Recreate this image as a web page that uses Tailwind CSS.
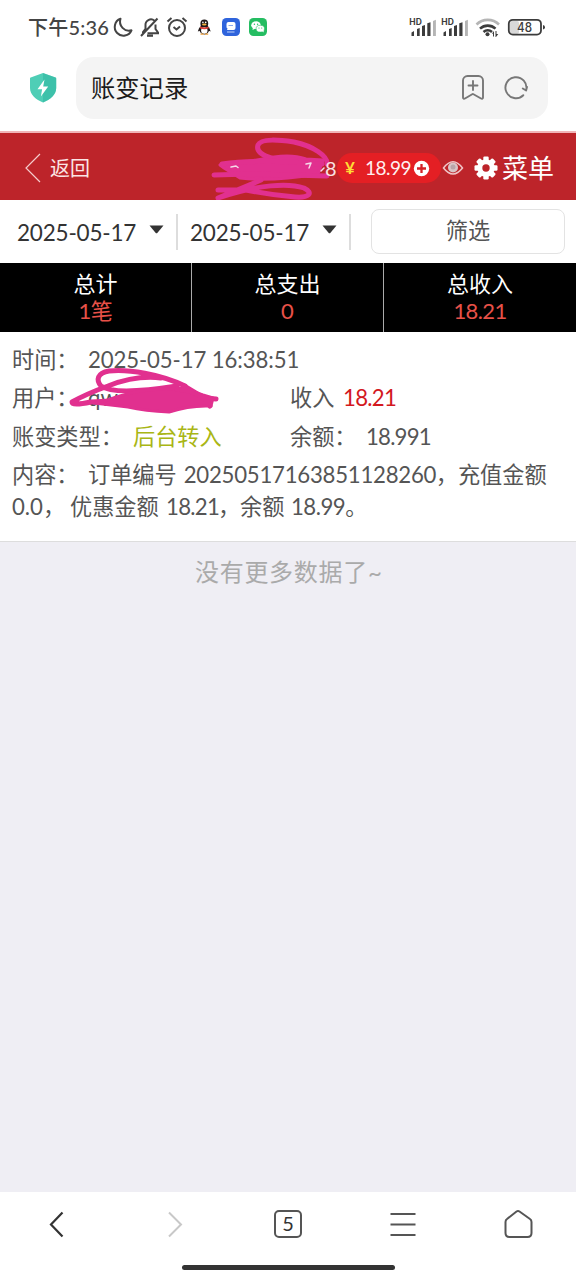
<!DOCTYPE html>
<html lang="zh-CN">
<head>
<meta charset="utf-8">
<title>账变记录</title>
<script src="https://cdn.jsdelivr.net/npm/@tailwindcss/browser@4"></script>
</head>
<body class="w-[576px] h-[1280px] overflow-hidden bg-white font-['Lato','Noto_Sans_CJK_SC',sans-serif] text-[22.200px] text-[#555] flex flex-col whitespace-nowrap">
<!-- status bar -->
<header class="h-[57px] shrink-0 flex items-start pt-[12px] pl-[28px] text-[#444]">
  <div class="h-[30px] w-[82px] flex items-center text-[20px] font-medium tracking-[0.200px]">下午5:36</div>
  <svg class="w-[166px] h-[30px]" viewBox="110 12 166 30" fill="none" stroke="#444" stroke-width="2">
    <path d="M120.500 18.800A8.700 8.700 0 1 0 131.500 30.300A9 9 0 0 1 120.500 18.800z" stroke-linejoin="round"/>
    <path d="M143 33V32l2.500-3v-3.500a5.500 5.500 0 0 1 9-4.800M155.500 24.500v4.500l2.500 3.500v.8h-10.500M141 36L157.500 18.500" />
    <path d="M147 35.600h6" stroke-width="2.400"/>
    <circle cx="177" cy="28" r="8"/><path d="M167.500 21.500l4-3.500M186.500 21.500l-4-3.500M173.500 27l3 2.500 3.500-3"/>
    <g stroke="none">
      <ellipse cx="204.300" cy="29.500" rx="4.800" ry="5" fill="#211919"/><ellipse cx="204.300" cy="23.800" rx="3.900" ry="4.200" fill="#211919"/>
      <path d="M199.500 27l-1.700 4.500 2.700-1zM209 27l1.700 4.500-2.700-1z" fill="#211919"/>
      <ellipse cx="204.300" cy="30.500" rx="3.200" ry="3.300" fill="#fff"/>
      <path d="M200 26.500q4.500 2 8.600 0v1.800q-4 2-8.600 0z" fill="#e53c35"/>
      <ellipse cx="204.300" cy="24.500" rx="2.300" ry="1" fill="#f3b13e"/><circle cx="202.900" cy="22.400" r=".8" fill="#fff"/><circle cx="205.700" cy="22.400" r=".8" fill="#fff"/>
      <path d="M200.500 33.500h3.200v1.200h-3.200zM205 33.500h3.200v1.200H205z" fill="#eea03a"/>
      <rect x="222" y="18" width="18" height="18" rx="4.500" fill="#2f64dc"/>
      <path d="M228.500 22h5a2 2 0 0 1 2 2v4a2 2 0 0 1-2 2h-6.500l.5-1.500-1-1V24a2 2 0 0 1 2-2z" fill="#fff"/>
      <path d="M228.500 25.500h4.500" stroke="#6c93ea" stroke-width=".8"/><path d="M227 32h7.500" stroke="#a9c2f5" stroke-width="1.200"/>
      <rect x="249" y="18" width="18" height="18" rx="4.500" fill="#25bd62"/>
      <ellipse cx="256" cy="25.200" rx="4.800" ry="3.900" fill="#fff"/><path d="M253 27l-.5 3 3-1.500z" fill="#fff"/>
      <ellipse cx="260.300" cy="28.700" rx="4.200" ry="3.400" fill="#fff" stroke="#25bd62" stroke-width=".6"/><path d="M262 31l1.700 1.500-.2-2.500z" fill="#fff"/>
      <g fill="#25bd62"><circle cx="254.400" cy="24.300" r=".7"/><circle cx="257.600" cy="24.300" r=".7"/><circle cx="259" cy="28" r=".6"/><circle cx="261.700" cy="28" r=".6"/></g>
    </g>
  </svg>
  <svg class="ml-[124px] w-[150px] h-[30px]" viewBox="400 12 150 30" fill="#3c3c3c">
    <g id="sig"><text x="409.300" y="25" font-family="Inter" font-size="8.500" font-weight="700" textLength="12.500" lengthAdjust="spacingAndGlyphs">HD</text>
    <path d="M411.500 32.500l2.500-1.500v5h-2.500zM417 29l2.700-1v8H417zM422 26l3-1v11h-3zM427.300 23.200l3.200-1V36h-3.200z"/><path d="M433 21l2.900-1.200V36H433z" fill="#b5b5b5"/></g>
    <use href="#sig" x="32"/>
    <g fill="none" stroke-width="2.600"><path d="M476.500 24.500a16 16 0 0 1 22.500 0" stroke="#b5b5b5"/><path d="M480 28.600a11.500 11.500 0 0 1 15.500 0M483.500 32a6.500 6.500 0 0 1 8.500 0" stroke="#3c3c3c"/></g>
    <circle cx="487.500" cy="34.200" r="2"/><path d="M492 33.500l2-2.500v5.500h-1v-2.800zM495.500 31h1v3h1.800l-2.300 3h-.5z"/>
    <rect x="510" y="21" width="9" height="13" rx="2" fill="#d9d9d9"/>
    <rect x="508.800" y="19.800" width="32.200" height="14.800" rx="4" fill="none" stroke="#3c3c3c" stroke-width="1.800"/><path d="M543 25q2 .3 2 2.300t-2 2.300z"/>
    <text x="517" y="31.800" font-family="Inter" font-size="12.500" font-weight="500" textLength="15" lengthAdjust="spacingAndGlyphs">48</text>
  </svg>
</header>
<!-- address bar -->
<div class="h-[74px] shrink-0 flex items-start">
  <svg class="ml-[29px] mt-[15px] w-[28px] h-[31px]" viewBox="29 72 28 31"><path d="M43 73l12.500 4.500a1 1 0 0 1 .7 1V88c0 7-6 11.500-13.200 14.500C36 99.500 30 95 30 88v-9.500a1 1 0 0 1 .7-1z" fill="#4fceb6"/><path d="M43 73l12.500 4.500a1 1 0 0 1 .7 1V88c0 7-6 11.500-13.200 14.500z" fill="#2fb7a0" opacity=".55"/><path d="M44.500 79.500L37.500 89.200h4.600l-1.200 7.300 7.300-10h-5z" fill="#fff"/></svg>
  <div class="ml-[19px] w-[472px] h-[62px] rounded-[18px] bg-[#f4f4f4] flex items-center pl-[15px]">
    <span class="w-[364px] text-[24.300px] text-[#1c1c1c]">账变记录</span>
    <svg class="w-[80px] h-[34px]" viewBox="455 71 80 34" fill="none" stroke="#777" stroke-width="1.900" stroke-linejoin="round" stroke-linecap="round"><path d="M467.500 76h11a4.500 4.500 0 0 1 4.500 4.500v17c0 1.200-1 1.500-2 1l-7.500-4.300c-.5-.3-.8-.3-1.300 0L465 98.500c-1 .5-2 .2-2-1v-17a4.500 4.500 0 0 1 4.500-4.500z"/><path d="M473 81v9M468.500 85.500h9"/><path d="M523.300 95.200A10.500 10.500 0 1 1 526.200 90M522.800 88.500l3.300 2 .9-3.500"/></svg>
  </div>
</div>
<!-- site navigation -->
<nav class="relative h-[69px] shrink-0 border-t-2 border-[#f1b5b8] bg-[#bd242a] flex items-center text-white pl-[24px] pt-[3px]">
  <svg class="w-[17px] h-[30px]" viewBox="24 153 17 30" fill="none" stroke="#f5cccc" stroke-width="1.200"><path d="M40 154L26 168l14 14"/></svg>
  <span class="ml-[9px] w-[275px] text-[20px] text-[#fbe5e5]">返回</span>
  <span class="w-[12px] text-[20px] text-[#fae3e3] relative z-10">8</span>
  <div class="h-[30px] w-[104px] rounded-full bg-[#e41f24] flex items-center pl-[8px]">
    <span class="w-[20px] text-[17px] font-bold text-[#ffdc35]">¥</span>
    <span class="w-[48px] text-[19px] text-[#fff0f0] tracking-[-0.500px]">18.99</span>
    <svg class="w-[17px] h-[17px]" viewBox="0 0 17 17"><circle cx="8.500" cy="8.500" r="7.700" fill="#fff"/><path d="M8.500 4v9M4 8.500h9" stroke="#d52127" stroke-width="2.300"/></svg>
  </div>
  <svg class="ml-[1px] w-[22px] h-[18px]" viewBox="0 0 22 18"><path d="M1.500 9Q11-3.500 20.500 9 11 21 1.500 9z" fill="none" stroke="#f0c5c7" stroke-width="1.500"/><circle cx="11" cy="8.500" r="5" fill="#d9c5c7"/><circle cx="11" cy="8" r="2.500" fill="#b9a5a9"/></svg>
  <svg class="ml-[10px] w-[24px] h-[24px]" viewBox="-12 -12 24 24"><g fill="#fff"><g id="t"><rect x="-2.700" y="-11.500" width="5.400" height="23" rx="1.200"/><rect x="-11.500" y="-2.700" width="23" height="5.400" rx="1.200"/></g><use href="#t" transform="rotate(45)"/><circle r="8.700"/></g><circle r="3.700" fill="#bd242a"/></svg>
  <span class="ml-[4px] text-[26px]">菜单</span>
  <svg class="absolute left-[205px] top-0 w-[130px] h-[67px]" viewBox="205 133 130 67" fill="none" stroke="#e1308f" stroke-width="5" stroke-linecap="round" stroke-linejoin="round">
    <path d="M274 159C261 155 256 151 258 145C261 138 280 140 294 142C313 146 328 156 327 164"/>
    <path d="M220 165Q230 162 245 162L274 157Q292 154 306 159L323 160 318 174Q270 182 240 178L224 168z" fill="#e1308f" stroke-width="3"/>
    <path d="M222 164Q250 160 290 162L322 164M214 175L250 174 327 176M218 190L246 190Q270 195 295 197C309 198 314 193 304 188C289 183 259 184 218 198M218 198Q242 188 261 180"/>
    <path d="M231 167l5-1 2 1.500M306 164l5-1-2 5M321 171l3-3" stroke="#f5d9e8" stroke-width="1.500"/>
  </svg>
</nav>
<!-- date filters -->
<div class="h-[63px] shrink-0 flex items-center pl-[17px] text-[#333]">
  <span class="w-[132px] text-[22.500px] tracking-[-0.200px] pt-[2px]">2025-05-17</span>
  <svg class="w-[15px] h-[9px] mb-[4px]" viewBox="0 0 15 9"><path d="M.5.500h14L8.500 7.800q-1 1-2 0z" fill="#333"/></svg>
  <span class="ml-[12px] h-[36px] w-[2px] bg-[#ddd]"></span>
  <span class="ml-[12px] w-[132px] text-[22.500px] tracking-[-0.200px] pt-[2px]">2025-05-17</span>
  <svg class="w-[15px] h-[9px] mb-[4px]" viewBox="0 0 15 9"><path d="M.5.500h14L8.500 7.800q-1 1-2 0z" fill="#333"/></svg>
  <span class="ml-[12px] h-[36px] w-[2px] bg-[#ddd]"></span>
  <button class="ml-[20px] w-[194px] h-[45px] mb-[1px] border border-[#e3e3e3] rounded-[8px] text-[#555]">筛选</button>
</div>
<!-- totals -->
<section class="h-[69px] shrink-0 bg-black grid grid-cols-3 text-center text-white text-[22px] leading-[27px]">
  <div class="pt-[7px] border-r border-[#aaa]"><p>总计</p><p class="text-[#e85148] tracking-[-0.500px]">1笔</p></div>
  <div class="pt-[7px] border-r border-[#aaa]"><p>总支出</p><p class="text-[#e85148]">0</p></div>
  <div class="pt-[7px]"><p>总收入</p><p class="text-[#e85148] tracking-[-0.600px]">18.21</p></div>
</section>
<!-- record -->
<section class="relative h-[210px] shrink-0 border-b border-[#ddd] pl-[12px] pt-[9px]">
  <div class="h-[38px] leading-[38px] flex"><span class="w-[76px]">时间：</span><span class="tracking-[-0.120px]">2025-05-17 16:38:51</span></div>
  <div class="h-[39px] leading-[38px] flex"><span class="w-[76px]">用户：</span><span class="w-[202px]">qw</span><span class="w-[53px]">收入</span><span class="text-[#d3181e] tracking-[-0.700px]">18.21</span></div>
  <div class="h-[38px] leading-[38px] flex"><span class="w-[121px]">账变类型：</span><span class="w-[157px] text-[#a9b615]">后台转入</span><span class="w-[76px]">余额：</span><span class="tracking-[-0.800px]">18.991</span></div>
  <div class="pt-[3px] leading-[32px]"><p class="flex"><span class="w-[76px]">内容：</span><span>订单编号</span><span class="ml-[7px] w-[252px] tracking-[-0.250px]">20250517163851128260</span><span>，充值金额</span></p><p class="flex"><span class="w-[36px]">0.0，</span><span class="ml-[22px] w-[90px]">优惠金额</span><span class="ml-[6px] w-[52px] tracking-[-0.700px]">18.21</span><span class="w-[22px]">，</span><span class="w-[45px]">余额</span><span class="ml-[6px] tracking-[-0.500px]">18.99</span><span>。</span></p></div>
  <svg class="absolute left-[65px] top-[32px] w-[160px] h-[50px]" viewBox="65 364 160 50" fill="none" stroke="#e1308f" stroke-width="5" stroke-linecap="round" stroke-linejoin="round">
    <path d="M185 386C160 374 128 369 109 371C97 373 96 380 101 386C112 394 145 391 177 386M161 378Q136 375 108 386Q86 394 72 402Q72 406 91 402L112 401"/>
    <path d="M108 400Q140 387 185 389L203 395 213 398 211 406Q190 405 169 412Q145 411 128 407L94 403z" fill="#e1308f" stroke-width="3"/>
    <path d="M184 386L204 398 216 399M177 389Q200 391 210 406"/>
  </svg>
</section>
<main class="h-[650px] shrink-0 bg-[#efeef4] pt-[12px] pl-[195px] text-[24px] leading-[36px] tracking-[0.700px] text-[#aaa]">没有更多数据了~</main>
<!-- browser toolbar -->
<footer class="grow flex flex-col items-center">
  <div class="w-full h-[64px] grid grid-cols-5 items-center justify-items-center">
    <svg class="w-[30px] h-[32px]" viewBox="43 1207 30 32" fill="none" stroke="#333" stroke-width="2.200"><path d="M62.500 1211.500L51 1223.500l11.500 12"/></svg>
    <svg class="w-[30px] h-[32px]" viewBox="158 1207 30 32" fill="none" stroke="#c8c8c8" stroke-width="2"><path d="M169 1211.500l12 12-12 12"/></svg>
    <div class="w-[28px] h-[28px] border-2 border-[#555] rounded-[5px] flex items-center justify-center text-[20px] text-[#333] pb-[2px]">5</div>
    <svg class="w-[26px] h-[28px]" viewBox="390 1209 26 28" stroke="#555" stroke-width="2"><path d="M390.500 1213h25M390.500 1223.500h25M390.500 1234h25"/></svg>
    <svg class="w-[30px] h-[32px]" viewBox="503 1207 30 32" fill="none" stroke="#555" stroke-width="2"><path d="M516.500 1210.500q1.500-1 3 0l10.500 7.500q1.500 1 1.500 3v11q0 4-4 4h-18q-4 0-4-4v-11q0-2 1.500-3z"/></svg>
  </div>
  <div class="mt-[9px] w-[213px] h-[5px] rounded-full bg-[#333]"></div>
</footer>
</body>
</html>
